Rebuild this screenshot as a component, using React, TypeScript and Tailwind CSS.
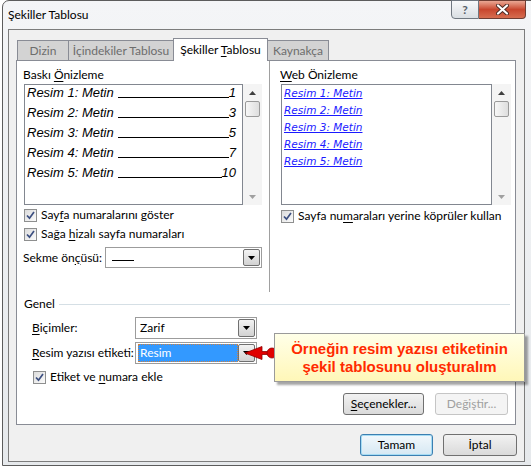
import React from "react";

const ui = "font-['Lato','Noto_Sans',sans-serif] text-[12px] text-black";

function U({ children }: { children: React.ReactNode }) {
  return <span className="underline underline-offset-[2px]">{children}</span>;
}

function Check() {
  return (
    <span className="w-[13px] h-[13px] border border-[#8e8f8f] bg-linear-to-br from-[#dcdcdc] to-[#fbfbfb] flex items-center justify-center shrink-0">
      <svg width="9" height="9" viewBox="0 0 9 9">
        <path d="M1 4.5 L3.5 7.2 L8 1" fill="none" stroke="#3c4f80" strokeWidth="1.7" />
      </svg>
    </span>
  );
}

function Arrow({ up }: { up?: boolean }) {
  return (
    <svg width="7" height="4" viewBox="0 0 7 4">
      <path d={up ? "M0 4h7L3.5 0z" : "M0 0h7L3.5 4z"} fill="#000" />
    </svg>
  );
}

function DropBtn() {
  return (
    <span className="w-[17px] h-full border border-[#707070] rounded-[2px] bg-linear-to-b from-[#f3f3f3] to-[#d2d2d2] flex items-center justify-center shrink-0">
      <Arrow />
    </span>
  );
}

function Combo({ w, h, children }: { w: string; h: string; children: React.ReactNode }) {
  return (
    <div className={`${w} ${h} border border-[#9c9c9c] bg-white p-px flex`}>
      <div className="flex-1 flex items-center min-w-0">{children}</div>
      <DropBtn />
    </div>
  );
}

function Scroll() {
  return (
    <div className="w-[19px] h-full bg-[#f4f4f4] flex flex-col items-center">
      <div className="h-[17px] flex items-center justify-center">
        <svg width="7" height="4" viewBox="0 0 7 4"><path d="M0 4h7L3.5 0z" fill="#404040" /></svg>
      </div>
      <div className="w-[15px] h-[16px] border border-[#9a9a9a] rounded-[2px] bg-linear-to-r from-[#f7f7f7] to-[#dedede]" />
      <div className="flex-1" />
      <div className="h-[17px] flex items-center justify-center">
        <svg width="7" height="4" viewBox="0 0 7 4"><path d="M0 0h7L3.5 4z" fill="#a0a0a0" /></svg>
      </div>
    </div>
  );
}

function Btn({ w, children, disabled, def }: { w: string; children: React.ReactNode; disabled?: boolean; def?: boolean }) {
  return (
    <div
      className={`${w} h-[22px] rounded-[3px] border flex items-center justify-center ${
        disabled
          ? "border-[#c5c5c5] bg-[#f4f4f4] text-[#a0a0a0]"
          : def
          ? "border-[#3c7fb1] bg-linear-to-b from-[#f2f8fc] to-[#d6e8f3] shadow-[inset_0_0_0_1px_#a6dcf4]"
          : "border-[#707070] bg-linear-to-b from-[#f2f2f2] to-[#dadada]"
      }`}
    >
      {children}
    </div>
  );
}

const printItems = [
  ["Resim 1: Metin", "1"],
  ["Resim 2: Metin", "3"],
  ["Resim 3: Metin", "5"],
  ["Resim 4: Metin", "7"],
  ["Resim 5: Metin", "10"],
];

export default function App() {
  return (
    <div className={`w-[531px] h-[467px] bg-white overflow-hidden relative ${ui}`}>
      <div className="ml-[2px] w-[540px] h-[466px] border border-[#5c5c5c] rounded-t-[7px] bg-linear-to-b from-[#f4f5f7] to-[#e6e9ec] flex flex-col">
        {/* title bar */}
        <div className="h-[28px] flex items-start shrink-0">
          <div className="pl-[5px] pt-[6px] text-[12px] leading-[16px]">Şekiller Tablosu</div>
          <div className="flex-1" />
          <div className="flex mr-[15px] -mt-px">
            <div className="w-[28px] h-[19px] border border-[#6f7780] rounded-bl-[4px] bg-linear-to-b from-[#f8f9fa] to-[#d9dee3] flex items-center justify-center text-[12px] font-bold text-[#5a6068]">
              ?
            </div>
            <div className="w-[47px] h-[19px] border border-[#6f3d33] border-l-0 rounded-br-[4px] bg-linear-to-b from-[#e9a794] via-[#c8462e] to-[#d66d50] flex items-center justify-center">
              <svg width="13" height="11" viewBox="0 0 13 11">
                <path d="M2 1.5 L11 9.5 M11 1.5 L2 9.5" stroke="#4a2a24" strokeWidth="4" strokeLinecap="round" />
                <path d="M2 1.5 L11 9.5 M11 1.5 L2 9.5" stroke="#ffffff" strokeWidth="2.2" strokeLinecap="round" />
              </svg>
            </div>
          </div>
        </div>

        {/* client */}
        <div className="ml-[5px] w-[517px] h-[433px] border border-[#7c7c7c] bg-[#f0f0f0] flex flex-col">
          {/* tabs */}
          <div className="mt-[8px] ml-[7px] h-[22px] flex items-end pl-px">
            <div className="w-[52px] h-[20px] border border-b-0 border-[#898c95] bg-[#d3d3d3] text-[#6d6d6d] flex items-center justify-center">
              Dizin
            </div>
            <div className="w-[106px] h-[20px] -ml-px border border-b-0 border-[#898c95] bg-[#d3d3d3] text-[#6d6d6d] flex items-center justify-center">
              İçindekiler Tablosu
            </div>
            <div className="w-[95px] h-[23px] -ml-px -mb-px relative z-10 border border-b-0 border-[#898c95] bg-white flex items-center justify-center">
              <span>
                Şekiller <U>T</U>ablosu
              </span>
            </div>
            <div className="w-[62px] h-[20px] -ml-px border border-b-0 border-[#898c95] bg-[#d3d3d3] text-[#6d6d6d] flex items-center justify-center">
              Kaynakça
            </div>
          </div>

          {/* panel */}
          <div className="ml-[7px] w-[500px] h-[365px] border border-[#898c95] bg-white flex flex-col">
            <div className="h-[231px] flex">
              {/* left column */}
              <div className="w-[253px] border-r border-[#a0a0a0] pl-[7px] flex flex-col">
                <div className="mt-[7px] h-[14px] leading-[14px] -ml-px">
                  Baskı <U>Ö</U>nizleme
                </div>
                <div className="mt-[2px] h-[121px] flex">
                  <div className="w-[219px] h-full border border-[#828790] font-['Liberation_Sans',sans-serif] italic text-[13px]">
                    {printItems.map(([t, n]) => (
                      <div key={t} className="h-[20px] flex items-start pl-[2px] pr-[6px]">
                        <span className="leading-[16px]">{t}</span>
                        <span className="flex-1 ml-[4px] h-[13px] border-b border-black" />
                        <span className="leading-[16px]">{n}</span>
                      </div>
                    ))}
                  </div>
                  <Scroll />
                </div>
                <div className="mt-[2px] h-[16px] flex items-center gap-[4px]">
                  <Check />
                  <span>
                    Say<U>f</U>a numaralarını göster
                  </span>
                </div>
                <div className="mt-[3px] h-[16px] flex items-center gap-[4px]">
                  <Check />
                  <span>
                    Sağa <U>h</U>izalı sayfa numaraları
                  </span>
                </div>
                <div className="mt-[5px] h-[21px] flex items-center -ml-px">
                  <span className="w-[82px]">
                    Sekme ön<U>ç</U>üsü:
                  </span>
                  <Combo w="w-[157px]" h="h-[21px]">
                    <span className="ml-[5px] mt-[6px] w-[22px] border-b border-black" />
                  </Combo>
                </div>
              </div>

              {/* right column */}
              <div className="flex-1 pl-[11px] flex flex-col">
                <div className="mt-[7px] h-[14px] leading-[14px] -ml-px">
                  <U>W</U>eb Önizleme
                </div>
                <div className="mt-[2px] h-[121px] flex">
                  <div className="w-[211px] h-full border border-[#828790] pl-[2px] font-['DejaVu_Sans',sans-serif] italic text-[10.5px] text-[#1a1aff]">
                    {printItems.map(([t]) => (
                      <div key={t} className="h-[17px] leading-[16px]">
                        <span className="underline">{t}</span>
                      </div>
                    ))}
                  </div>
                  <div className="w-[17px] h-full">
                    <Scroll />
                  </div>
                </div>
                <div className="mt-[3px] h-[16px] flex items-center gap-[4px]">
                  <Check />
                  <span>
                    Sayfa nu<U>m</U>araları yerine köprüler kullan
                  </span>
                </div>
              </div>
            </div>

            {/* Genel */}
            <div className="mt-[5px] h-[14px] pl-[7px] pr-[5px] flex items-center gap-[4px]">
              <span className="leading-[14px]">Genel</span>
              <span className="flex-1 border-t border-[#d5dfe5]" />
            </div>
            <div className="mt-[6px] h-[22px] pl-[15px] flex items-center">
              <span className="w-[103px]">
                <U>B</U>içimler:
              </span>
              <Combo w="w-[122px]" h="h-[22px]">
                <span className="pl-[3px]">Zarif</span>
              </Combo>
            </div>
            <div className="mt-[3px] h-[22px] pl-[15px] flex items-center">
              <span className="w-[103px]">
                <U>R</U>esim yazısı etiketi:
              </span>
              <Combo w="w-[122px]" h="h-[22px]">
                <span className="ml-px h-full flex-1 bg-[#3399ff] text-white pl-[2px] flex items-center outline-1 outline-dotted outline-[#d08040] -outline-offset-1">
                  Resim
                </span>
              </Combo>
            </div>
            <div className="mt-[5px] h-[16px] pl-[16px] flex items-center gap-[4px]">
              <Check />
              <span>
                Etiket ve <U>n</U>umara ekle
              </span>
            </div>
            <div className="mt-[8px] pr-[7px] flex justify-end gap-[11px]">
              <Btn w="w-[81px]">
                <span>
                  <U>S</U>eçenekler...
                </span>
              </Btn>
              <Btn w="w-[73px]" disabled>
                Değiştir...
              </Btn>
            </div>
          </div>

          <div className="mt-[9px] pr-[7px] flex justify-end gap-[10px]">
            <Btn w="w-[73px]" def>
              Tamam
            </Btn>
            <Btn w="w-[74px]">İptal</Btn>
          </div>
        </div>
      </div>

      {/* callout */}
      <svg className="absolute left-[242px] top-[345px]" width="36" height="16" viewBox="0 0 36 16">
        <path d="M3 8 L20 1.5 L20 6.5 L30 6.5 L30 9.5 L20 9.5 L20 14.5 Z" fill="#e00000" stroke="#900000" strokeWidth="0.8" />
        <circle cx="30" cy="8" r="5" fill="#e00000" stroke="#900000" strokeWidth="0.8" />
      </svg>
      <div className="absolute left-[274px] top-[333px] w-[251px] h-[49px] border border-[#9a9a9a] bg-linear-to-b from-[#ffffe8] to-[#fff7b8] shadow-[3px_3px_2px_rgba(0,0,0,0.35)] flex flex-col items-center justify-center font-['Liberation_Sans',sans-serif] font-bold text-[15px] leading-[18px] text-[#ff2a00]">
        <span>Örneğin resim yazısı etiketinin</span>
        <span>şekil tablosunu oluşturalım</span>
      </div>
    </div>
  );
}
